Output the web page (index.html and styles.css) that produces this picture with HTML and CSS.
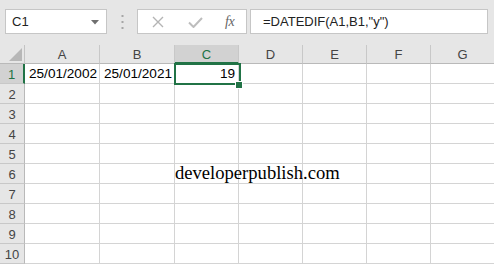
FILE: index.html
```html
<!DOCTYPE html>
<html>
<head>
<meta charset="utf-8">
<link rel="stylesheet" href="styles.css">
</head>
<body>
<div class="app">
  <div class="toolbar">
    <div class="namebox">
      <span class="name">C1</span>
      <svg class="caret" width="8" height="5" viewBox="0 0 8 5"><path d="M0 0H8L4 4.5Z" fill="#6f6f6f"/></svg>
    </div>
    <div class="grip">
      <svg width="3" height="14" viewBox="0 0 3 14"><rect x="0.5" y="0" width="2" height="2" fill="#a6a6a6"/><rect x="0.5" y="6" width="2" height="2" fill="#a6a6a6"/><rect x="0.5" y="12" width="2" height="2" fill="#a6a6a6"/></svg>
    </div>
    <div class="fxbox">
      <svg class="ico-x" width="12" height="12" viewBox="0 0 12 12"><path d="M1 1L11 11M11 1L1 11" stroke="#b4b4b4" stroke-width="1.4" fill="none"/></svg>
      <svg class="ico-ok" width="15" height="11" viewBox="0 0 15 11"><path d="M1 5.5L5.5 10L14 1" stroke="#bdbdbd" stroke-width="2" fill="none"/></svg>
      <span class="fx">fx</span>
    </div>
    <div class="formula">=DATEDIF(A1,B1,"y")</div>
  </div>
  <div class="sheet">
    <div class="corner"><svg width="13" height="13" viewBox="0 0 13 13"><path d="M13 0V13H0Z" fill="#b7b7b7"/></svg></div>
    <div class="ch">A</div>
    <div class="ch">B</div>
    <div class="ch sel">C</div>
    <div class="ch">D</div>
    <div class="ch">E</div>
    <div class="ch">F</div>
    <div class="ch">G</div>

    <div class="rh sel">1</div>
    <div class="c">25/01/2002</div>
    <div class="c">25/01/2021</div>
    <div class="c num">19</div>
    <div class="c"></div><div class="c"></div><div class="c"></div><div class="c"></div>

    <div class="rh">2</div>
    <div class="c"></div><div class="c"></div><div class="c"></div><div class="c"></div><div class="c"></div><div class="c"></div><div class="c"></div>
    <div class="rh">3</div>
    <div class="c"></div><div class="c"></div><div class="c"></div><div class="c"></div><div class="c"></div><div class="c"></div><div class="c"></div>
    <div class="rh">4</div>
    <div class="c"></div><div class="c"></div><div class="c"></div><div class="c"></div><div class="c"></div><div class="c"></div><div class="c"></div>
    <div class="rh">5</div>
    <div class="c"></div><div class="c"></div><div class="c"></div><div class="c"></div><div class="c"></div><div class="c"></div><div class="c"></div>
    <div class="rh">6</div>
    <div class="c"></div><div class="c"></div><div class="c spill"><span>developerpublish.com</span></div><div class="c"></div><div class="c"></div><div class="c"></div><div class="c"></div>
    <div class="rh">7</div>
    <div class="c"></div><div class="c"></div><div class="c"></div><div class="c"></div><div class="c"></div><div class="c"></div><div class="c"></div>
    <div class="rh">8</div>
    <div class="c"></div><div class="c"></div><div class="c"></div><div class="c"></div><div class="c"></div><div class="c"></div><div class="c"></div>
    <div class="rh">9</div>
    <div class="c"></div><div class="c"></div><div class="c"></div><div class="c"></div><div class="c"></div><div class="c"></div><div class="c"></div>
    <div class="rh">10</div>
    <div class="c"></div><div class="c"></div><div class="c"></div><div class="c"></div><div class="c"></div><div class="c"></div><div class="c"></div>

    <div class="selection"></div>
    <div class="handle"></div>
  </div>
</div>
</body>
</html>
```
FILE: styles.css
```css
html, body {
  margin: 0;
  padding: 0;
  background: #ffffff;
  overflow: hidden;
}
.app {
  width: 494px;
  height: 265px;
  overflow: hidden;
  font-family: "Liberation Sans", Arial, sans-serif;
}
.toolbar {
  height: 45px;
  box-sizing: border-box;
  background: #e6e6e6;
  display: flex;
  align-items: flex-start;
  padding: 9px 0 0 5px;
}
.namebox {
  width: 102px;
  height: 25px;
  box-sizing: border-box;
  background: #fff;
  border: 1px solid #c6c6c6;
  display: flex;
  align-items: center;
  justify-content: space-between;
  padding: 0 7px 0 6px;
}
.name {
  font-size: 13px;
  color: #222;
}
.caret { margin-top: 1px; }
.grip {
  width: 30px;
  height: 25px;
  display: flex;
  align-items: center;
  justify-content: center;
}
.fxbox {
  width: 110px;
  height: 25px;
  box-sizing: border-box;
  background: #fff;
  border: 1px solid #c6c6c6;
  display: flex;
  align-items: center;
  padding-left: 14px;
}
.ico-x { margin-top: 1px; }
.ico-ok { margin-left: 24px; margin-top: 2px; }
.fx {
  margin-left: 22px;
  font-family: "Liberation Serif", "Times New Roman", serif;
  font-style: italic;
  font-size: 14px;
  color: #666;
  letter-spacing: -0.5px;
}
.formula {
  margin-left: 3px;
  width: 238px;
  height: 25px;
  box-sizing: border-box;
  background: #fff;
  border: 1px solid #c6c6c6;
  display: flex;
  align-items: center;
  padding-left: 12px;
  font-size: 13px;
  color: #222;
}
.sheet {
  position: relative;
  display: grid;
  grid-template-columns: 25px 75px 75px 64px 64px 64px 64px 64px;
  grid-template-rows: 19px repeat(10, 20px);
  width: 495px;
}
.sheet > div {
  box-sizing: border-box;
}
.corner {
  background: #e6e6e6;
  border-right: 1px solid #c3c3c3;
  border-bottom: 1px solid #b9b9b9;
  display: flex;
  align-items: flex-end;
  justify-content: flex-end;
  padding: 0 2px 2px 0;
}
.corner svg { display: block; }
.ch {
  background: #e6e6e6;
  border-right: 1px solid #c8c8c8;
  border-bottom: 1px solid #b9b9b9;
  display: flex;
  align-items: center;
  justify-content: center;
  font-size: 13px;
  color: #444;
  padding-top: 1px;
}
.ch.sel {
  background: #d2d2d2;
  color: #217346;
  border-bottom: 2px solid #217346;
}
.rh {
  background: #e6e6e6;
  border-right: 1px solid #b9b9b9;
  border-bottom: 1px solid #c8c8c8;
  display: flex;
  align-items: center;
  justify-content: center;
  font-size: 13px;
  color: #444;
  padding-top: 1px;
}
.rh.sel {
  background: #d2d2d2;
  color: #217346;
  border-right: 2px solid #217346;
}
.c {
  border-right: 1px solid #d4d4d4;
  border-bottom: 1px solid #d4d4d4;
  display: flex;
  align-items: flex-end;
  padding: 0 2px 2px 4px;
  font-size: 13.6px;
  color: #000;
  white-space: nowrap;
}
.c.num {
  justify-content: flex-end;
  padding-right: 3px;
}
.c.spill {
  overflow: visible;
  padding: 0;
  position: relative;
  z-index: 1;
}
.c.spill span {
  font-family: "Liberation Serif", "Times New Roman", serif;
  font-size: 18.6px;
  line-height: 20px;
}
.selection {
  position: absolute;
  left: 174px;
  top: 18px;
  width: 67px;
  height: 22px;
  border: 2px solid #217346;
  box-sizing: border-box;
}
.handle {
  position: absolute;
  left: 235px;
  top: 36px;
  width: 8px;
  height: 8px;
  background: #217346;
  border: 1px solid #fff;
  box-sizing: border-box;
}
```
